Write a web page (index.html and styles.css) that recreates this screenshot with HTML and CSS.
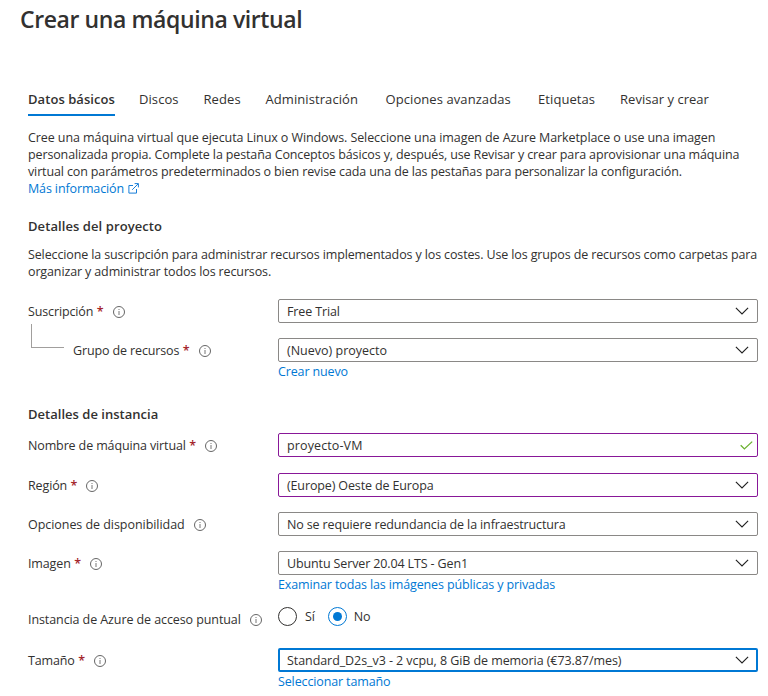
FILE: index.html
```html
<!DOCTYPE html>
<html lang="es">
<head>
<meta charset="utf-8">
<title>Crear una máquina virtual</title>
<link rel="stylesheet" href="styles.css">
</head>
<body>
<svg class="defs" width="0" height="0">
  <symbol id="info" viewBox="0 0 12 12"><circle cx="6" cy="6" r="5.5" fill="none" stroke="#666"/><path d="M6 5v4M6 3v1" stroke="#777" fill="none"/></symbol>
  <symbol id="chevron" viewBox="0 0 14 8"><path d="M.9.9 7 6.9 13.1.9" fill="none" stroke="#222" stroke-width="1.15"/></symbol>
</svg>
<h1 class="title">Crear una máquina virtual</h1>
<main class="content">
  <nav class="tabs">
    <a class="tab active">Datos básicos</a>
    <a class="tab discos">Discos</a>
    <a class="tab redes">Redes</a>
    <a class="tab admin">Administración</a>
    <a class="tab avanzadas">Opciones avanzadas</a>
    <a class="tab etiquetas">Etiquetas</a>
    <a class="tab revisar">Revisar y crear</a>
  </nav>
  <p class="text intro"><span class="lead">Cree una máquina virtual que ejecuta Linux o Windows. Seleccione una imagen de Azure Marketplace o use una imagen</span><br>personalizada propia. Complete la pestaña Conceptos básicos y, después, use Revisar y crear para aprovisionar una máquina<br>virtual con parámetros predeterminados o bien revise cada una de las pestañas para personalizar la configuración.<br><a class="link">Más información<svg class="external" width="11" height="11" viewBox="0 0 11 11"><path d="M5 2.5H.9v7.6h7.6V6M6.6.6h3.8v3.8M10.2.8 4.2 6.8" fill="none" stroke="#1a7fd8"/></svg></a></p>

  <h2 class="heading project">Detalles del proyecto</h2>
  <p class="text">Seleccione la suscripción para administrar recursos implementados y los costes. Use los grupos de recursos como carpetas para<br>organizar y administrar todos los recursos.</p>

  <div class="row subscription">
    <label class="label">Suscripción<b class="req">*</b><svg class="info"><use href="#info"/></svg></label>
    <div class="field"><span>Free Trial</span><svg class="chevron"><use href="#chevron"/></svg></div>
  </div>
  <div class="row group">
    <label class="label"><i class="branch"></i><span>Grupo de recursos</span><b class="req">*</b><svg class="info"><use href="#info"/></svg></label>
    <div class="stack">
      <div class="field"><span class="nuevo">(Nuevo) proyecto</span><svg class="chevron"><use href="#chevron"/></svg></div>
      <a class="link below">Crear nuevo</a>
    </div>
  </div>

  <h2 class="heading instance">Detalles de instancia</h2>
  <div class="row name">
    <label class="label">Nombre de máquina virtual<b class="req">*</b><svg class="info"><use href="#info"/></svg></label>
    <div class="field changed"><span class="vm-name">proyecto-VM</span><svg class="check" width="13" height="9" viewBox="0 0 13 9"><path d="M.7 4.2 4.4 7.9 12.2.6" fill="none" stroke="#6bb130" stroke-width="1.3"/></svg></div>
  </div>
  <div class="row region">
    <label class="label">Región<b class="req">*</b><svg class="info"><use href="#info"/></svg></label>
    <div class="field changed"><span>(Europe) Oeste de Europa</span><svg class="chevron"><use href="#chevron"/></svg></div>
  </div>
  <div class="row">
    <label class="label avail">Opciones de disponibilidad<svg class="info"><use href="#info"/></svg></label>
    <div class="field"><span>No se requiere redundancia de la infraestructura</span><svg class="chevron"><use href="#chevron"/></svg></div>
  </div>
  <div class="row">
    <label class="label">Imagen<b class="req">*</b><svg class="info"><use href="#info"/></svg></label>
    <div class="stack">
      <div class="field"><span>Ubuntu Server 20.04 LTS - Gen1</span><svg class="chevron"><use href="#chevron"/></svg></div>
      <a class="link below">Examinar todas las imágenes públicas y privadas</a>
    </div>
  </div>
  <div class="row spot">
    <label class="label">Instancia de Azure de acceso puntual<svg class="info"><use href="#info"/></svg></label>
    <div class="radios">
      <i class="radio"></i><span>Sí</span>
      <i class="radio selected"></i><span>No</span>
    </div>
  </div>
  <div class="row size">
    <label class="label">Tamaño<b class="req">*</b><svg class="info"><use href="#info"/></svg></label>
    <div class="stack">
      <div class="field focused"><span class="vm-size">Standard_D2s_v3 - 2 vcpu, 8 GiB de memoria (€73.87/mes)</span><svg class="chevron"><use href="#chevron"/></svg></div>
      <a class="link below">Seleccionar tamaño</a>
    </div>
  </div>
</main>
</body>
</html>
```
FILE: styles.css
```css
* { box-sizing: border-box; }
html { overflow: hidden; }
body {
  margin: 0;
  background: #fff;
  color: #323130;
  font: 12.5px/17px "Open Sans", "Noto Sans", sans-serif;
  letter-spacing: -.13px;
  white-space: nowrap;
}
.defs { position: absolute; }
h1, h2, p { margin: 0; }
.title {
  height: 40px;
  padding-left: 20px;
  font-size: 23px;
  line-height: 39px;
  font-weight: 600;
  letter-spacing: -.4px;
}
.content { padding: 50px 10px 0 28px; }
.tabs {
  display: flex;
  height: 26px;
  font-size: 13px;
  line-height: 19px;
}
.tab { letter-spacing: .08px; }
.active {
  width: 87px;
  border-bottom: 2px solid #0078d4;
  font-weight: 600;
  letter-spacing: .06px;
}
.discos { margin-left: 24px; width: 64.5px; }
.redes { width: 62px; }
.admin { width: 120px; }
.avanzadas { width: 152.5px; }
.etiquetas { width: 82px; }
.revisar { letter-spacing: .03px; }
.intro { margin-top: 13px; }
.lead { letter-spacing: -.085px; }
.link { color: #0078d4; }
.external { margin-left: 4px; vertical-align: -1px; }
.heading {
  font-size: 13px;
  line-height: 18px;
  font-weight: 600;
  letter-spacing: .08px;
}
.project { margin: 20px 0 11px; }
.instance { margin: 25px 0 10px; letter-spacing: .02px; }
.row {
  display: flex;
  align-items: flex-start;
  margin-bottom: 15px;
}
.subscription { margin-top: 19px; }
.name { margin-bottom: 16px; }
.label {
  display: flex;
  align-items: center;
  width: 250px;
  height: 24px;
}
.avail { letter-spacing: -.05px; }
.req {
  margin-left: 3.5px;
  color: #a4262c;
  font-weight: 600;
}
.info {
  flex: none;
  width: 12px;
  height: 12px;
  margin: 1px 0 0 9px;
}
.branch {
  width: 33px;
  height: 24px;
  margin: -28px 9px 0 3px;
  border: solid #a19f9d;
  border-width: 0 0 1px 1px;
}
.stack { display: flex; flex-direction: column; }
.field {
  display: flex;
  align-items: center;
  justify-content: space-between;
  width: 480px;
  height: 24px;
  padding: 0 8px;
  border: 1px solid #8a8886;
  border-radius: 2px;
}
.changed { border-color: #881798; }
.focused {
  padding: 0 7px;
  border: 2px solid #0078d4;
}
.chevron { width: 14px; height: 8px; }
.check { margin-right: -4px; }
.nuevo { letter-spacing: 0; }
.vm-name { letter-spacing: .12px; }
.vm-size { letter-spacing: -.07px; }
.below { margin-top: 1px; }
.group { margin-bottom: 0; }
.spot { margin: -1px 0 17px; }
.spot .label { padding-top: 1px; letter-spacing: -.09px; }
.radios {
  display: flex;
  align-items: center;
  height: 19px;
}
.radio {
  display: grid;
  place-items: center;
  width: 19px;
  height: 19px;
  margin-left: 13px;
  margin-right: 7px;
  border: 1px solid #323130;
  border-radius: 50%;
}
.radio:first-child { margin-left: 0; margin-right: 8px; }
.selected { border-color: #0078d4; }
.selected::after {
  content: "";
  width: 9px;
  height: 9px;
  border-radius: 50%;
  background: #0078d4;
}
```
